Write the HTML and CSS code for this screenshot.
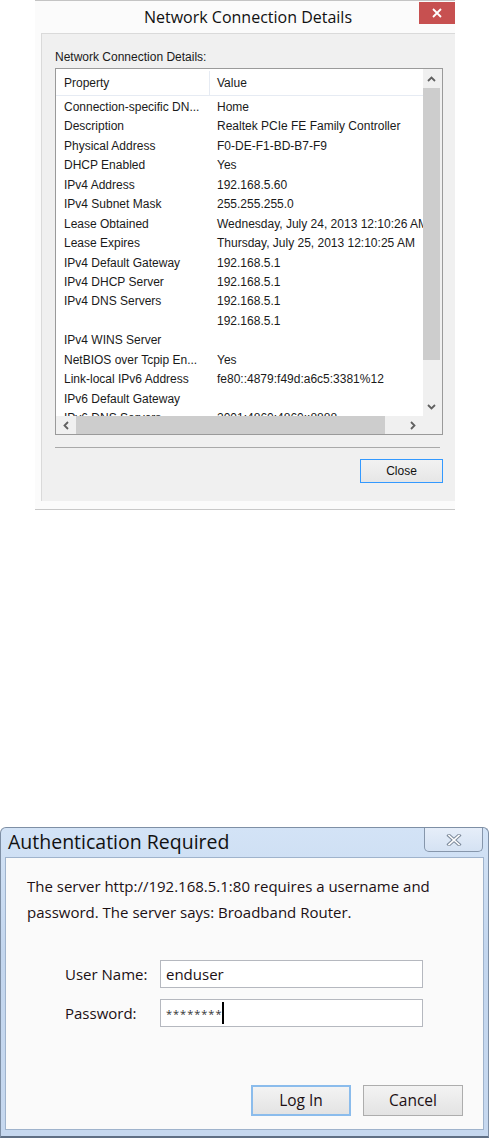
FILE: index.html
```html
<!DOCTYPE html>
<html>
<head>
<meta charset="utf-8">
<link rel="stylesheet" href="styles.css">
</head>
<body>
<div class="page">
  <div class="win1">
    <div class="tb1">
      <div class="tb1-spacer"></div>
      <div class="tb1-title">Network Connection Details</div>
      <div class="x-red">
        <svg width="12" height="12" viewBox="0 0 12 12"><path d="M2 2 L10 10 M10 2 L2 10" stroke="#fff" stroke-width="1.8" fill="none"/></svg>
      </div>
    </div>
    <div class="panel">
      <div class="lbl">Network Connection Details:</div>
      <div class="lv">
        <div class="lv-main">
          <div class="lv-head"><div class="c1">Property</div><div class="c2">Value</div></div>
          <div class="row"><div class="c1">Connection-specific DN...</div><div class="c2">Home</div></div>
          <div class="row"><div class="c1">Description</div><div class="c2">Realtek PCIe FE Family Controller</div></div>
          <div class="row"><div class="c1">Physical Address</div><div class="c2">F0-DE-F1-BD-B7-F9</div></div>
          <div class="row"><div class="c1">DHCP Enabled</div><div class="c2">Yes</div></div>
          <div class="row"><div class="c1">IPv4 Address</div><div class="c2">192.168.5.60</div></div>
          <div class="row"><div class="c1">IPv4 Subnet Mask</div><div class="c2">255.255.255.0</div></div>
          <div class="row"><div class="c1">Lease Obtained</div><div class="c2">Wednesday, July 24, 2013 12:10:26 AM</div></div>
          <div class="row"><div class="c1">Lease Expires</div><div class="c2">Thursday, July 25, 2013 12:10:25 AM</div></div>
          <div class="row"><div class="c1">IPv4 Default Gateway</div><div class="c2">192.168.5.1</div></div>
          <div class="row"><div class="c1">IPv4 DHCP Server</div><div class="c2">192.168.5.1</div></div>
          <div class="row"><div class="c1">IPv4 DNS Servers</div><div class="c2">192.168.5.1</div></div>
          <div class="row"><div class="c1"></div><div class="c2">192.168.5.1</div></div>
          <div class="row"><div class="c1">IPv4 WINS Server</div><div class="c2"></div></div>
          <div class="row"><div class="c1">NetBIOS over Tcpip En...</div><div class="c2">Yes</div></div>
          <div class="row"><div class="c1">Link-local IPv6 Address</div><div class="c2">fe80::4879:f49d:a6c5:3381%12</div></div>
          <div class="row"><div class="c1">IPv6 Default Gateway</div><div class="c2"></div></div>
          <div class="row"><div class="c1">IPv6 DNS Servers</div><div class="c2">2001:4860:4860::8888</div></div>
        </div>
        <div class="vs">
          <div class="arr"><svg width="9" height="6" viewBox="0 0 9 6"><path d="M1 5 L4.5 1.5 L8 5" stroke="#606060" stroke-width="1.8" fill="none"/></svg></div>
          <div class="vthumb"></div>
          <div class="vfill"></div>
          <div class="arr"><svg width="9" height="6" viewBox="0 0 9 6"><path d="M1 1 L4.5 4.5 L8 1" stroke="#606060" stroke-width="1.8" fill="none"/></svg></div>
        </div>
        <div class="hs">
          <div class="harr"><svg width="6" height="9" viewBox="0 0 6 9"><path d="M5 1 L1.5 4.5 L5 8" stroke="#606060" stroke-width="1.8" fill="none"/></svg></div>
          <div class="hthumb"></div>
          <div class="hfill"></div>
          <div class="harr"><svg width="6" height="9" viewBox="0 0 6 9"><path d="M1 1 L4.5 4.5 L1 8" stroke="#606060" stroke-width="1.8" fill="none"/></svg></div>
        </div>
        <div class="corner"></div>
      </div>
      <div class="sep"></div>
      <div class="btnrow"><div class="btn-close">Close</div></div>
    </div>
  </div>

  <div class="win2">
    <div class="tb2">
      <div class="tb2-title">Authentication Required</div>
      <div class="x-outline">
        <svg width="16" height="12" viewBox="0 0 16 12"><path d="M3 1.5 L13 10.5 M13 1.5 L3 10.5" stroke="#7d8a9b" stroke-width="3.6" stroke-linecap="square" fill="none"/><path d="M3 1.5 L13 10.5 M13 1.5 L3 10.5" stroke="#fff" stroke-width="1.6" stroke-linecap="square" fill="none"/></svg>
      </div>
    </div>
    <div class="content">
      <p class="msg">The server http://192.168.5.1:80 requires a username and password. The server says: Broadband Router.</p>
      <div class="form">
        <div class="flabel">User Name:</div>
        <div class="field">enduser</div>
        <div class="flabel">Password:</div>
        <div class="field pw"><span class="stars">********</span><span class="caret"></span></div>
      </div>
      <div class="btns">
        <div class="btn2 primary">Log In</div>
        <div class="btn2">Cancel</div>
      </div>
    </div>
  </div>
</div>
</body>
</html>
```

FILE: styles.css
```css
* { box-sizing: border-box; }
html, body { margin: 0; padding: 0; background: #fff; }
.page { display: flex; flex-direction: column; width: 490px; height: 1139px; overflow: hidden; }

/* ---- Top dialog ---- */
.win1 {
  margin-left: 35px;
  width: 420px;
  height: 510px;
  background: #fbfbfb;
  border-top: 1px solid #c4c4c4;
  border-bottom: 1px solid #c8c8c8;
  display: flex;
  flex-direction: column;
}
.tb1 { height: 32px; display: flex; align-items: flex-start; }
.tb1-spacer { width: 36px; }
.tb1-title {
  flex: 1;
  text-align: center;
  font-family: "Open Sans", "Noto Sans", sans-serif;
  font-size: 16px;
  line-height: 20px;
  padding-top: 6px;
  color: #111;
  padding-left: 6px;
}
.x-red {
  width: 36px; height: 22px; margin-top: 1px;
  background: #c75050;
  display: flex; align-items: center; justify-content: center;
}
.panel {
  margin-left: 6px;
  height: 468px;
  background: #f0f0f0;
  border-top: 1px solid #dadada;
  border-left: 1px solid #dadada;
  padding: 14px 0 0 13px;
  font-family: "Liberation Sans", Arial, sans-serif;
  font-size: 12px;
  color: #1a1a1a;
}
.lbl { height: 15px; line-height: 15px; padding-top: 2px; margin-bottom: 5px; }
.lv {
  width: 388px; height: 367px;
  border: 1px solid #9a9a9a;
  background: #fff;
  display: grid;
  grid-template-columns: 367px 19px;
  grid-template-rows: 347px 18px;
}
.lv-main { overflow: hidden; }
.lv-head {
  height: 27px;
  display: flex;
  border-bottom: 1px solid #e6ebf3;
  line-height: 24px;
  padding-top: 2px;
}
.lv-head .c1 { border-right: 1px solid #e6ebf3; }
.c1 { width: 154px; flex: none; padding-left: 8px; white-space: nowrap; overflow: hidden; }
.c2 { flex: none; padding-left: 7px; white-space: nowrap; }
.row { display: flex; height: 19.45px; line-height: 17.45px; padding-top: 2px; }
.lv-head + .row { margin-top: 1px; }

.vs { background: #f0f0f0; display: flex; flex-direction: column; padding-right: 2px; }
.arr { height: 19px; display: flex; align-items: center; justify-content: center; flex: none; }
.vthumb { height: 272px; background: #cdcdcd; flex: none; }
.vfill { flex: 1; }
.hs { background: #f0f0f0; display: flex; align-items: stretch; }
.harr { width: 20px; display: flex; align-items: center; justify-content: center; flex: none; }
.hthumb { width: 309px; background: #cdcdcd; flex: none; }
.hfill { flex: 1; }
.corner { background: #f0f0f0; }

.sep { width: 385px; height: 1px; background: #a9a9a9; margin-top: 12px; }
.btnrow { display: flex; justify-content: flex-end; width: 388px; margin-top: 11px; }
.btn-close {
  width: 83px; height: 24px;
  border: 1px solid #3399ff;
  background: linear-gradient(#f2f2f2, #e6e6e6);
  text-align: center;
  line-height: 22px;
  color: #111;
}

/* ---- Bottom dialog ---- */
.win2 {
  margin-top: 317px;
  width: 489px;
  height: 311px;
  border: 1px solid #7e8fa5;
  border-bottom: 2px solid #5f6f84;
  border-radius: 6px 6px 0 0;
  background: linear-gradient(#d3e3f6, #c3d6ee 40%, #c6d8ef);
  display: flex;
  flex-direction: column;
  font-family: "Open Sans", "Noto Sans", sans-serif;
  color: #1c1014;
}
.tb2 { height: 29px; display: flex; justify-content: space-between; align-items: flex-start; }
.tb2-title { font-size: 19.5px; line-height: 26px; padding: 1px 0 0 7px; color: #111; }
.x-outline {
  width: 59px; height: 24px;
  margin-right: 5px;
  border: 1px solid #8696ab;
  border-top: none;
  border-radius: 0 0 5px 5px;
  background: linear-gradient(#e6eef9, #d5e2f3);
  display: flex; align-items: center; justify-content: center;
}
.content {
  margin: 0 4px 6px 4px;
  flex: 1;
  background: #fafafa;
  border: 1px solid #9fb3cc;
  padding: 15px 20px 13px 21px;
  display: flex;
  flex-direction: column;
}
.msg { margin: 0; font-size: 15px; line-height: 26px; width: 440px; }
.form {
  display: grid;
  grid-template-columns: 95px 263px;
  row-gap: 11px;
  margin: 35px 0 0 38px;
  align-items: center;
}
.flabel { font-size: 15px; }
.field {
  height: 28px;
  border: 1px solid #b5b8bf;
  background: #fff;
  font-size: 15px;
  line-height: 26px;
  padding-left: 5px;
  display: flex;
  align-items: center;
}
.stars { font-size: 11px; letter-spacing: 1px; color: #333; line-height: 20px; padding-top: 2px; }
.caret { width: 2px; height: 22px; background: #000; margin-left: 0; }
.btns { margin-top: auto; display: flex; justify-content: flex-end; gap: 12px; }
.btn2 {
  width: 100px; height: 31px;
  border: 1px solid #adadad;
  background: linear-gradient(#f3f3f3, #e3e3e3);
  font-size: 15.5px;
  line-height: 29px;
  text-align: center;
}
.btn2.primary { border: 2px solid #8bbcec; line-height: 27px; }
```
